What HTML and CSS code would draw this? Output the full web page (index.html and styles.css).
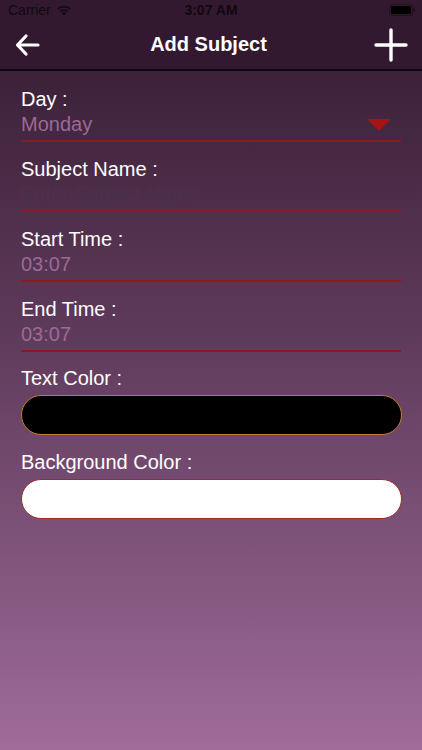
FILE: index.html
```html
<!DOCTYPE html>
<html lang="en">
<head>
    <meta charset="UTF-8">
    <meta name="viewport" content="width=device-width, initial-scale=1.0">
    <title>Add Subject</title>
    <link rel="stylesheet" href="styles.css">
</head>
<body>
    <div class="top">
        <div class="status">
            <span class="carrier">Carrier
                <svg class="wifi" width="16" height="12" viewBox="0 0 16 12">
                    <path d="M8 11.5 L5.6 9 A3.4 3.4 0 0 1 10.4 9 Z" fill="#120a10"/>
                    <path d="M3.6 7 A6.2 6.2 0 0 1 12.4 7 L11.2 8.2 A4.5 4.5 0 0 0 4.8 8.2 Z" fill="#120a10"/>
                    <path d="M1.2 4.6 A9.6 9.6 0 0 1 14.8 4.6 L13.6 5.8 A7.9 7.9 0 0 0 2.4 5.8 Z" fill="#120a10"/>
                </svg>
            </span>
            <span class="clock">3:07 AM</span>
            <span class="battery"><span class="battery-fill"></span></span>
        </div>
        <div class="navbar">
            <svg class="nav-icon" width="30" height="30" viewBox="0 0 30 30">
                <path d="M25 15 H5 M13 6 L4.5 15 L13 24" fill="none" stroke="#fff" stroke-width="3.2" stroke-linecap="round" stroke-linejoin="round"/>
            </svg>
            <h1>Add Subject</h1>
            <svg class="nav-icon" width="34" height="34" viewBox="0 0 34 34">
                <path d="M17 2 V32 M2 17 H32" fill="none" stroke="#fff" stroke-width="3.4" stroke-linecap="round"/>
            </svg>
        </div>
    </div>

    <div class="form">
        <div class="field">
            <div class="label">Day :</div>
            <div class="value select">
                <span>Monday</span>
                <span class="caret"></span>
            </div>
        </div>
        <div class="field">
            <div class="label">Subject Name :</div>
            <div class="value placeholder">Enter Subject Name</div>
        </div>
        <div class="field">
            <div class="label">Start Time :</div>
            <div class="value">03:07</div>
        </div>
        <div class="field">
            <div class="label">End Time :</div>
            <div class="value">03:07</div>
        </div>

        <div class="color-field">
            <div class="label">Text Color :</div>
            <div class="swatch swatch-text"></div>
        </div>
        <div class="color-field">
            <div class="label">Background Color :</div>
            <div class="swatch swatch-bg"></div>
        </div>
    </div>
</body>
</html>
```

FILE: styles.css
```css
html, body { margin: 0; height: 100%; }
body {
    font-family: "Liberation Sans", Arial, sans-serif;
    background: linear-gradient(#361c32 0px, #3c2139 70px, #5e3a5a 330px, #8a5c85 620px, #a06c99 750px);
    min-height: 750px;
}

.top { background: #33192f; border-bottom: 2px solid #0e070d; }
.status { height: 20px; display: flex; align-items: center; justify-content: space-between; padding: 0 9px 0 8px; position: relative; }
.carrier { font-size: 14px; color: #100910; display: flex; align-items: center; gap: 5px; }
.wifi { margin-top: -1px; }
.clock { position: absolute; left: 0; right: 0; text-align: center; font-size: 14px; font-weight: bold; color: #100910; }
.battery { width: 20px; height: 8px; border: 1px solid #20121e; border-radius: 3px; padding: 1px; display: flex; position: relative; }
.battery::after { content: ""; position: absolute; right: -3px; top: 3px; width: 2px; height: 4px; background: #20121e; border-radius: 0 1px 1px 0; }
.battery-fill { flex: 1; background: #000; border-radius: 1px; }

.navbar { height: 49px; display: flex; align-items: center; justify-content: space-between; padding: 0 14px 0 13px; }
.navbar h1 { margin: 0; font-size: 20px; font-weight: bold; color: #fff; }
.nav-icon { display: block; }

.form { padding: 1px 21px 0; }
.field { padding-top: 15px; padding-bottom: 3px; border-bottom: 2px solid #8a1a1e; }
.label { font-size: 20px; line-height: 24px; color: #fff; }
.value { font-size: 20px; line-height: 26px; color: #9b6a96; }
.value.placeholder { color: #4a3149; }
.select { display: flex; justify-content: space-between; align-items: center; }
.caret { width: 0; height: 0; border-left: 12px solid transparent; border-right: 12px solid transparent; border-top: 12px solid #a81212; margin-right: 10px; margin-top: 2px; }

.color-field { padding-top: 14px; }
.color-field + .color-field { padding-top: 15px; }
.swatch { height: 38px; margin-top: 5px; border-radius: 20px; margin-right: -1px; }
.swatch-text { background: #000; border: 1px solid #c47f2c; }
.swatch-bg { background: #fff; border: 1px solid #a02a2a; }
```
